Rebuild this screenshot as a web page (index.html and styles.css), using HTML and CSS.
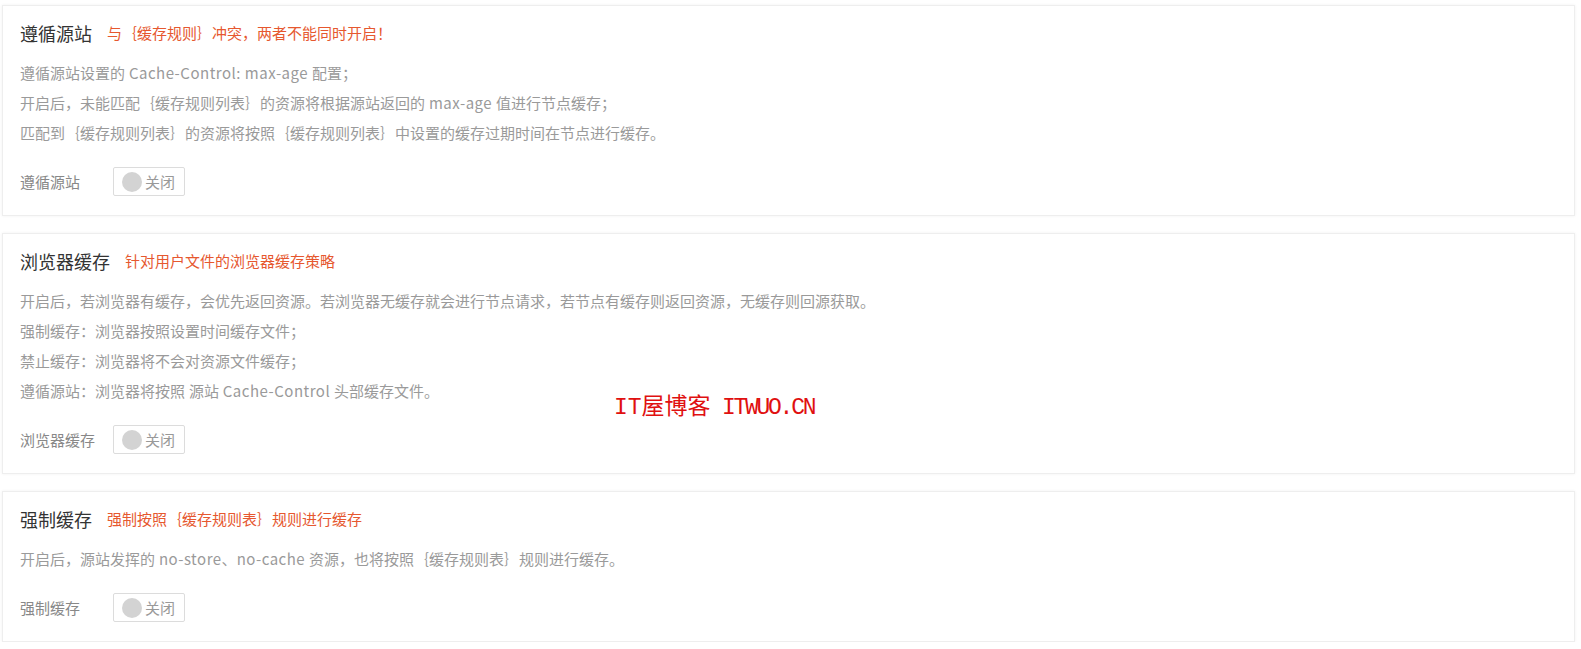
FILE: index.html
```html
<!DOCTYPE html>
<html lang="zh-CN">
<head>
<meta charset="utf-8">
<title>缓存配置</title>
<link rel="stylesheet" href="styles.css">
</head>
<body>
<div class="page">
  <section class="card">
    <div class="card-head">
      <h2 class="title">遵循源站</h2>
      <span class="sub">与｛缓存规则｝冲突，两者不能同时开启！</span>
    </div>
    <div class="desc">
      <p>遵循源站设置的<span class="en"> Cache-Control: max-age </span>配置；</p>
      <p>开启后，未能匹配｛缓存规则列表｝的资源将根据源站返回的<span class="en"> max-age </span>值进行节点缓存；</p>
      <p>匹配到｛缓存规则列表｝的资源将按照｛缓存规则列表｝中设置的缓存过期时间在节点进行缓存。</p>
    </div>
    <div class="row">
      <span class="label">遵循源站</span>
      <span class="switch"><i class="dot"></i><span class="state">关闭</span></span>
    </div>
  </section>

  <section class="card">
    <div class="card-head">
      <h2 class="title">浏览器缓存</h2>
      <span class="sub">针对用户文件的浏览器缓存策略</span>
    </div>
    <div class="desc">
      <p>开启后，若浏览器有缓存，会优先返回资源。若浏览器无缓存就会进行节点请求，若节点有缓存则返回资源，无缓存则回源获取。</p>
      <p>强制缓存：浏览器按照设置时间缓存文件；</p>
      <p>禁止缓存：浏览器将不会对资源文件缓存；</p>
      <p>遵循源站：浏览器将按照<span class="en"> </span>源站<span class="en"> Cache-Control </span>头部缓存文件。</p>
    </div>
    <div class="row">
      <span class="label">浏览器缓存</span>
      <span class="switch"><i class="dot"></i><span class="state">关闭</span></span>
    </div>
  </section>

  <section class="card">
    <div class="card-head">
      <h2 class="title">强制缓存</h2>
      <span class="sub">强制按照｛缓存规则表｝规则进行缓存</span>
    </div>
    <div class="desc">
      <p>开启后，源站发挥的<span class="en"> no-store</span>、<span class="en">no-cache </span>资源，也将按照｛缓存规则表｝规则进行缓存。</p>
    </div>
    <div class="row">
      <span class="label">强制缓存</span>
      <span class="switch"><i class="dot"></i><span class="state">关闭</span></span>
    </div>
  </section>

  <div class="watermark">IT屋博客<span class="lat"> ITWUO.CN</span></div>
</div>
</body>
</html>
```

FILE: styles.css
```css
* { box-sizing: border-box; }
html, body { margin: 0; padding: 0; background: #fff; }
body {
  font-family: "Noto Sans CJK SC", "Noto Sans", sans-serif;
  color: #333;
}
.page {
  position: relative;
  padding: 5px 6px 0 2px;
  display: flex;
  flex-direction: column;
  gap: 17px;
}
.card {
  background: #fff;
  border: 1px solid #eeeeee;
  box-shadow: 0 0 3px rgba(0,0,0,0.06);
  padding: 15px 17px 19px;
}
.card-head {
  display: flex;
  align-items: center;
  height: 24px;
}
.title {
  margin: 0;
  font-size: 18px;
  font-weight: normal;
  color: #333;
  line-height: 24px;
}
.sub {
  margin-left: 15px;
  font-size: 15px;
  color: #e6582f;
  line-height: 24px;
}
.desc {
  margin-top: 13px;
  font-size: 15px;
  color: #9a9a9a;
}
.desc p {
  margin: 0;
  line-height: 30px;
  height: 30px;
  white-space: nowrap;
}
.en {
  letter-spacing: 0.5px;
}
.row {
  margin-top: 19px;
  display: flex;
  align-items: center;
  height: 29px;
}
.label {
  width: 93px;
  font-size: 15px;
  color: #888;
}
.switch {
  display: flex;
  align-items: center;
  width: 72px;
  height: 29px;
  border: 1px solid #dcdcdc;
  border-radius: 2px;
  padding-left: 8px;
  background: #fff;
}
.dot {
  width: 20px;
  height: 20px;
  border-radius: 50%;
  background: #d3d3d3;
}
.state {
  margin-left: 3px;
  font-size: 15px;
  color: #999;
}
.watermark {
  position: absolute;
  left: 614px;
  top: 394px;
  font-family: "Liberation Mono", "Noto Sans CJK SC", monospace;
  font-size: 23px;
  color: #e01010;
  white-space: pre;
  line-height: 28px;
}
.watermark .lat { letter-spacing: -2.3px; }
```
